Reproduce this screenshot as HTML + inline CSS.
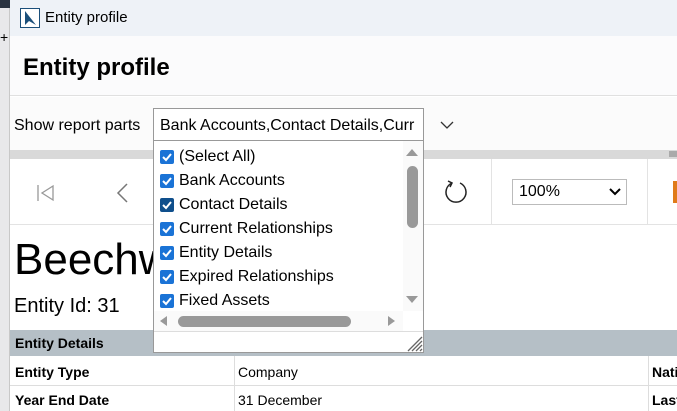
<!DOCTYPE html>
<html><head><style>
*{margin:0;padding:0;box-sizing:border-box}
body{width:677px;height:411px;overflow:hidden;position:relative;background:#fff;font-family:"Liberation Sans",sans-serif;color:#000}
.a{position:absolute}
.cb{position:absolute;left:6px;width:14px;height:14px;background:#1a73d6;border-radius:2px}
.cb svg{position:absolute;left:1px;top:1px}
.it{position:absolute;left:0;height:24px;font-size:16px;line-height:24px}
.it span{position:absolute;left:25px;top:0;white-space:nowrap}
</style></head><body>
<div class="a" style="left:0;top:0;width:10px;height:411px;background:#e8e8ea;border-right:1px solid #c8c8c8"></div>
<div class="a" style="left:0;top:0;width:12px;height:8px;background:#2a3340"></div>
<div class="a" style="left:0;top:30px;font-size:14px;line-height:14px">+</div>
<div class="a" style="left:10px;top:0;width:667px;height:36px;background:#eef2f7"></div>
<svg class="a" style="left:20px;top:8px" width="20" height="20"><rect x=".5" y=".5" width="19" height="19" fill="#fff" stroke="#1b4f7a"/><path d="M5 3 L16 17 L9 13 L5 17Z" fill="#1b4f7a"/></svg>
<div class="a" style="left:45px;top:9px;font-size:15px">Entity profile</div>
<div class="a" style="left:10px;top:36px;width:667px;height:60px;background:#fbfbfc;border-bottom:1px solid #e0e0e0"></div>
<div class="a" style="left:23px;top:54px;font-size:24px;font-weight:bold">Entity profile</div>
<div class="a" style="left:10px;top:97px;width:667px;height:53px;background:#fbfbfb"></div>
<div class="a" style="left:14px;top:117px;font-size:16px">Show report parts</div>
<div class="a" style="left:153px;top:108px;width:271px;height:37px;border:1px solid #999;background:#fff;overflow:hidden;font-size:16px;padding:8px 0 0 6px;white-space:nowrap">Bank Accounts,Contact Details,Curr</div>
<svg class="a" style="left:440px;top:120px" width="14" height="10"><path d="M1 2 L7 8 L13 2" fill="none" stroke="#333" stroke-width="1.3"/></svg>
<div class="a" style="left:10px;top:150px;width:667px;height:9px;background:#d9d9d9"></div>
<div class="a" style="left:10px;top:159px;width:667px;height:66px;border-bottom:1px solid #e3e3e3"></div>
<div class="a" style="left:491px;top:159px;width:1px;height:66px;background:#e3e3e3"></div>
<div class="a" style="left:647px;top:159px;width:1px;height:66px;background:#e3e3e3"></div>
<svg class="a" style="left:36px;top:183px" width="20" height="20"><path d="M2 2V18M17 3L6 10L17 17Z" fill="none" stroke="#999" stroke-width="1.3"/></svg>
<svg class="a" style="left:114px;top:182px" width="16" height="22"><path d="M13 2L4 11L13 20" fill="none" stroke="#777" stroke-width="1.5"/></svg>
<svg class="a" style="left:442px;top:178px" width="28" height="28"><path d="M10 5A10 10 0 1 0 18 5" fill="none" stroke="#222" stroke-width="1.5"/><path d="M6 3L10 5L8 9" fill="none" stroke="#222" stroke-width="1.5"/></svg>
<div class="a" style="left:512px;top:179px;width:115px;height:26px;border:1px solid #bbb;font-size:16px;padding:3px 0 0 6px">100%</div>
<svg class="a" style="left:609px;top:188px" width="12" height="8"><path d="M1 1L6 6L11 1" fill="none" stroke="#000" stroke-width="2"/></svg>
<div class="a" style="left:673px;top:181px;width:4px;height:22px;background:#e07b1a"></div>
<div class="a" style="left:14px;top:232px;font-size:44px;line-height:56px">Beechwood</div>
<div class="a" style="left:14px;top:295px;font-size:20px">Entity Id: 31</div>
<div class="a" style="left:10px;top:330px;width:667px;height:26px;background:#b5bfc6"></div>
<div class="a" style="left:15px;top:335px;font-size:14px;font-weight:bold">Entity Details</div>
<div class="a" style="left:10px;top:356px;width:667px;height:30px;border-bottom:1px solid #ddd"></div>
<div class="a" style="left:234px;top:356px;width:1px;height:55px;background:#ddd"></div>
<div class="a" style="left:648px;top:356px;width:1px;height:55px;background:#ddd"></div>
<div class="a" style="left:15px;top:364px;font-size:14px;font-weight:bold">Entity Type</div>
<div class="a" style="left:238px;top:364px;font-size:14px">Company</div>
<div class="a" style="left:15px;top:392px;font-size:14px;font-weight:bold">Year End Date</div>
<div class="a" style="left:238px;top:392px;font-size:14px">31 December</div>
<div class="a" style="left:652px;top:364px;font-size:14px;font-weight:bold">Nati</div>
<div class="a" style="left:652px;top:392px;font-size:14px;font-weight:bold">Last</div>
<div class="a" style="left:669px;top:151px;width:8px;height:6px;background:#aaa"></div>
<!-- dropdown -->
<div class="a" style="left:153px;top:140px;width:271px;height:213px;background:#fff;border:1px solid #999;overflow:hidden">
<div class="it" style="top:4px"><div class="cb" style="top:5px"><svg width="12" height="12"><path d="M2 6L5 9L10 3" fill="none" stroke="#fff" stroke-width="2"/></svg></div><span>(Select All)</span></div>
<div class="it" style="top:28px"><div class="cb" style="top:5px"><svg width="12" height="12"><path d="M2 6L5 9L10 3" fill="none" stroke="#fff" stroke-width="2"/></svg></div><span>Bank Accounts</span></div>
<div class="it" style="top:52px"><div class="cb" style="top:5px;background:#0f4f8c"><svg width="12" height="12"><path d="M2 6L5 9L10 3" fill="none" stroke="#fff" stroke-width="2"/></svg></div><span>Contact Details</span></div>
<div class="it" style="top:76px"><div class="cb" style="top:5px"><svg width="12" height="12"><path d="M2 6L5 9L10 3" fill="none" stroke="#fff" stroke-width="2"/></svg></div><span>Current Relationships</span></div>
<div class="it" style="top:100px"><div class="cb" style="top:5px"><svg width="12" height="12"><path d="M2 6L5 9L10 3" fill="none" stroke="#fff" stroke-width="2"/></svg></div><span>Entity Details</span></div>
<div class="it" style="top:124px"><div class="cb" style="top:5px"><svg width="12" height="12"><path d="M2 6L5 9L10 3" fill="none" stroke="#fff" stroke-width="2"/></svg></div><span>Expired Relationships</span></div>
<div class="it" style="top:148px"><div class="cb" style="top:5px"><svg width="12" height="12"><path d="M2 6L5 9L10 3" fill="none" stroke="#fff" stroke-width="2"/></svg></div><span>Fixed Assets</span></div>
<div class="a" style="left:249px;top:0;width:20px;height:170px;background:#fafafa"></div>
<svg class="a" style="left:251px;top:6px" width="14" height="10"><path d="M1 9L7 2L13 9Z" fill="#999"/></svg>
<div class="a" style="left:253px;top:25px;width:11px;height:62px;background:#999;border-radius:6px"></div>
<svg class="a" style="left:251px;top:154px" width="14" height="10"><path d="M1 1L7 8L13 1Z" fill="#999"/></svg>
<div class="a" style="left:0;top:170px;width:249px;height:20px;background:#fafafa"></div>
<svg class="a" style="left:4px;top:174px" width="10" height="12"><path d="M9 1L2 6L9 11Z" fill="#999"/></svg>
<div class="a" style="left:24px;top:175px;width:173px;height:11px;background:#999;border-radius:6px"></div>
<svg class="a" style="left:233px;top:174px" width="10" height="12"><path d="M1 1L8 6L1 11Z" fill="#999"/></svg>
<div class="a" style="left:0;top:190px;width:271px;height:1px;background:#ddd"></div>
<svg class="a" style="left:250px;top:192px" width="20" height="20"><path d="M4 18L18 4M8 18L18 8M12 18L18 12M16 18L18 16" stroke="#666" stroke-width="1.3"/></svg>
</div>
</body></html>
